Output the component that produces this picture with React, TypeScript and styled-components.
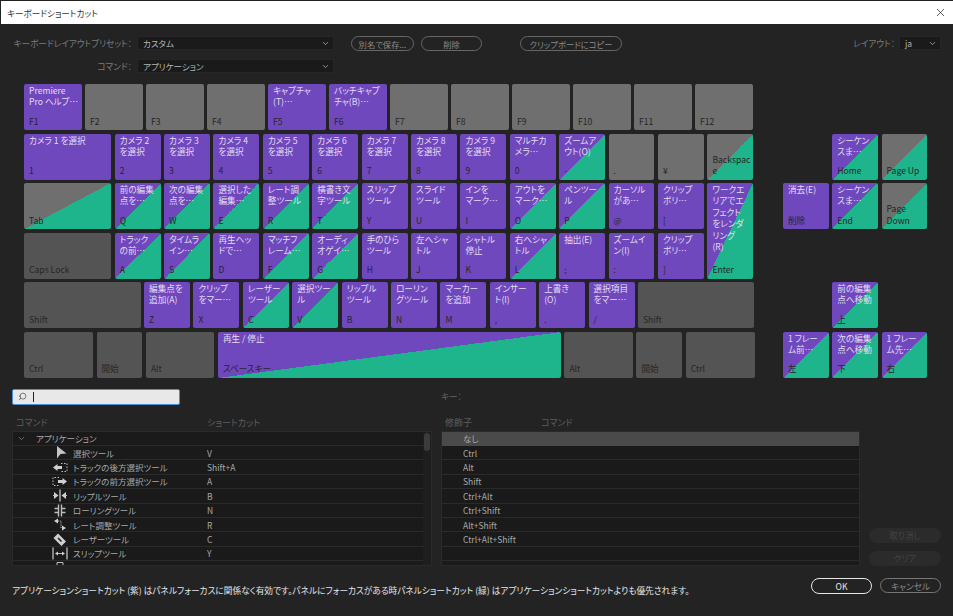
import React from 'react';
import styled, { createGlobalStyle } from 'styled-components';
import { ChevronDown, Search, X } from 'lucide-react';

const PURPLE = '#7048be';
const GREEN = '#1eb48c';
const GREY = '#6f6f6f';
const DARK = '#545454';

type KeyKind = 'app' | 'mixed' | 'panel' | 'blank' | 'dim';

interface IKeyProps {
  w: number;
  label?: string;
  name: string;
  kind?: KeyKind;
}

const GlobalStyle = createGlobalStyle`
  html, body {
    margin: 0;
    padding: 0;
    background: #232323;
  }
  body {
    font-family: "Noto Sans CJK JP", "Liberation Sans", sans-serif;
    font-size: 8.6px;
    font-feature-settings: "palt";
  }
`;

const Window = styled.div`
  width: 953px;
  height: 616px;
  overflow: hidden;
  display: flex;
  flex-direction: column;
  background: #232323;
  color: #bbb;
  opacity: 0.999;
`;

const TitleBar = styled.div`
  height: 23px;
  margin: 1px 0 0 1px;
  padding: 0 6px;
  background: #fff;
  color: #333;
  display: flex;
  align-items: center;
  justify-content: space-between;
  flex-shrink: 0;
`;

const CloseButton = styled.div`
  display: flex;
  align-items: center;
  color: #222;
`;

const Toolbar = styled.div`
  display: flex;
  align-items: flex-start;
  padding: 12px 12px 0;
  height: 60px;
  flex-shrink: 0;
  box-sizing: border-box;
`;

const FormColumn = styled.div`
  display: flex;
  flex-direction: column;
  gap: 9px;
`;

const FormRow = styled.div`
  display: flex;
  align-items: center;
  gap: 5px;
  height: 14px;
`;

const FieldLabel = styled.div`
  width: 120px;
  text-align: right;
  color: #7c7c7c;
  white-space: nowrap;
`;

const SelectBox = styled.div<{ $w: number }>`
  width: ${({ $w }) => $w}px;
  height: 14px;
  box-sizing: border-box;
  padding: 0 3px 0 5px;
  background: #1a1a1a;
  border: 1px solid #262626;
  color: #b4b4b4;
  display: flex;
  align-items: center;
  justify-content: space-between;
  font-size: 8.5px;
`;

const PillButton = styled.div<{ $w: number; $ml: number }>`
  width: ${({ $w }) => $w}px;
  margin-left: ${({ $ml }) => $ml}px;
  height: 15px;
  box-sizing: border-box;
  border: 1px solid #666;
  border-radius: 8px;
  color: #8a8a8a;
  display: flex;
  align-items: center;
  justify-content: center;
  white-space: nowrap;
  font-size: 8.3px;
`;

const ToolbarSpacer = styled.div`
  flex: 1;
`;

const LayoutLabel = styled.div`
  color: #7c7c7c;
  margin-right: 4px;
  line-height: 15px;
`;

const KeyboardArea = styled.div`
  display: flex;
  padding-left: 24px;
  flex-shrink: 0;
`;

const MainKeys = styled.div`
  width: 731px;
  display: flex;
  flex-direction: column;
  gap: 3.5px;
`;

const KeyRow = styled.div`
  display: flex;
  gap: 3.5px;
  height: 46px;
`;

const MiddleBlock = styled.div`
  display: flex;
  gap: 3.5px;
`;

const MiddleRows = styled.div`
  display: flex;
  flex-direction: column;
  gap: 3.5px;
`;

const NavCluster = styled.div`
  margin-left: 28px;
  display: grid;
  grid-template-columns: repeat(3, 45.8px);
  grid-template-rows: repeat(6, 46px);
  gap: 3.5px;
`;

const keyBackground = (kind: KeyKind) => {
  switch (kind) {
    case 'app':
      return PURPLE;
    case 'mixed':
      return `linear-gradient(to bottom right, ${PURPLE} 50%, ${GREEN} 50%)`;
    case 'panel':
      return `linear-gradient(to bottom right, ${GREY} 50%, ${GREEN} 50%)`;
    case 'dim':
      return DARK;
    default:
      return GREY;
  }
};

const KeyCap = styled.div<{ $w?: number; $kind: KeyKind; $cell?: string }>`
  width: ${({ $w }) => ($w ? `${$w}px` : 'auto')};
  ${({ $cell }) => ($cell ? `grid-area: ${$cell};` : '')}
  flex-shrink: 0;
  box-sizing: border-box;
  padding: 1px 2px 3px 5px;
  border-radius: 2px;
  background: ${({ $kind }) => keyBackground($kind)};
  display: flex;
  flex-direction: column;
  justify-content: space-between;
  overflow: hidden;
`;

const KeyLabel = styled.div`
  color: #e2dcf0;
  line-height: 11.4px;
  white-space: pre-line;
`;

const KeyName = styled.div`
  color: #262626;
  line-height: 11.4px;
  white-space: pre-line;
`;

const BottomArea = styled.div`
  display: flex;
  padding: 11px 12px 0;
  flex-shrink: 0;
`;

const ListColumn = styled.div<{ $w: number }>`
  width: ${({ $w }) => $w}px;
  display: flex;
  flex-direction: column;
  flex-shrink: 0;
`;

const SearchBox = styled.div`
  width: 168px;
  height: 16px;
  box-sizing: border-box;
  background: #e8e8e8;
  border: 1px solid #4a90d8;
  border-radius: 2px;
  display: flex;
  align-items: center;
  padding-left: 5px;
  gap: 6px;
  color: #333;
`;

const Caret = styled.div`
  width: 1px;
  height: 10px;
  background: #222;
`;

const KeyCaption = styled.div`
  height: 16px;
  line-height: 14px;
  color: #666;
`;

const ListHeader = styled.div`
  display: flex;
  height: 26px;
  padding-top: 10px;
  box-sizing: border-box;
  align-items: center;
  color: #5e5e5e;
  padding-left: 4px;
  font-size: 9px;
`;

const HeaderCell = styled.div<{ $w: number }>`
  width: ${({ $w }) => $w}px;
`;

const ListPanel = styled.div<{ $w: number }>`
  width: ${({ $w }) => $w}px;
  height: 135px;
  position: relative;
  overflow: hidden;
  background: #1a1a1a;
  box-sizing: border-box;
  border: 1px solid #2a2a2a;
`;

const ListRow = styled.div<{ $selected?: boolean; $tight?: boolean }>`
  height: 14.42px;
  box-sizing: border-box;
  display: flex;
  align-items: center;
  border-bottom: 1px solid ${({ $selected }) => ($selected ? '#4a4a4a' : '#2a2a2a')};
  background: ${({ $selected }) => ($selected ? '#4a4a4a' : 'transparent')};
  margin-right: ${({ $tight }) => ($tight ? 8 : 0)}px;
  color: #a8a8a8;
  font-size: 8.5px;
`;

const TreeToggle = styled.div`
  width: 23px;
  padding-left: 4px;
  box-sizing: border-box;
  display: flex;
  color: #8a8a8a;
`;

const IconCell = styled.div`
  width: 60px;
  padding-left: 39px;
  box-sizing: border-box;
  display: flex;
  align-items: center;
  flex-shrink: 0;
`;

const CommandName = styled.div`
  width: 134px;
  white-space: nowrap;
  flex-shrink: 0;
`;

const ModifierName = styled.div`
  padding-left: 21px;
`;

const ScrollTrack = styled.div`
  position: absolute;
  right: 0;
  top: 0;
  bottom: 0;
  width: 8px;
  background: #1e1e1e;
`;

const ScrollThumb = styled.div`
  margin: 1px 1px 0;
  height: 18px;
  border-radius: 3px;
  background: #3c3c3c;
`;

const SideButtons = styled.div`
  margin-left: 9px;
  align-self: flex-end;
  display: flex;
  flex-direction: column;
  gap: 8px;
`;

const GhostButton = styled.div`
  width: 72px;
  height: 15px;
  border-radius: 8px;
  background: #2b2b2b;
  color: #444;
  display: flex;
  align-items: center;
  justify-content: center;
`;

const FooterRow = styled.div`
  display: flex;
  padding: 12px 12px 0;
  justify-content: space-between;
  align-items: flex-start;
`;

const Notice = styled.div`
  margin-top: 6px;
  color: #e4e4e4;
  white-space: nowrap;
  font-size: 8.7px;
`;

const DialogButtons = styled.div`
  display: flex;
  gap: 8px;
  align-items: center;
`;

const DialogButton = styled.div<{ $primary?: boolean }>`
  width: 61px;
  height: ${({ $primary }) => ($primary ? 16 : 15)}px;
  box-sizing: border-box;
  border: 1px solid ${({ $primary }) => ($primary ? '#e6e6e6' : '#777')};
  border-radius: 8px;
  color: ${({ $primary }) => ($primary ? '#e6e6e6' : '#888')};
  display: flex;
  align-items: center;
  justify-content: center;
`;

const Glyph: React.FC<{ children: React.ReactNode }> = ({ children }) => (
  <svg width="16" height="13" viewBox="0 0 16 13" fill="none" stroke="#bdbdbd" strokeWidth="1">
    {children}
  </svg>
);

const toolIcons: Record<string, React.ReactNode> = {
  select: (
    <Glyph>
      <path d="M5 0 L14.5 7.5 L8.5 8 L5 12.5 Z" fill="#c4c4c4" stroke="none" />
    </Glyph>
  ),
  back: (
    <Glyph>
      <path d="M1 6.5 L5.5 3 V5 H10 V8 H5.5 V10 Z" fill="#d0d0d0" stroke="none" />
      <path d="M9 2.5 H15 V10.5 H9" strokeDasharray="1.5 1.5" />
    </Glyph>
  ),
  forward: (
    <Glyph>
      <path d="M15 6.5 L10.5 3 V5 H6 V8 H10.5 V10 Z" fill="#d0d0d0" stroke="none" />
      <path d="M7 2.5 H1 V10.5 H7" strokeDasharray="1.5 1.5" />
    </Glyph>
  ),
  ripple: (
    <Glyph>
      <path d="M8 0.5 V12.5" strokeWidth="1.4" />
      <path d="M6.5 6.5 L2 3 V10 Z M9.5 6.5 L14 3 V10 Z" fill="#d0d0d0" stroke="none" />
      <path d="M1 6.5 H3 M13 6.5 H15" />
    </Glyph>
  ),
  rolling: (
    <Glyph>
      <path d="M6.5 0.5 V12.5 M9.5 0.5 V12.5" strokeWidth="1.4" />
      <path d="M2.5 4.5 H6 M2.5 8.5 H6 M10 4.5 H13.5 M10 8.5 H13.5" strokeWidth="1.6" />
    </Glyph>
  ),
  rate: (
    <Glyph>
      <path d="M2 3 L6 0.5 V5.5 Z M14 10 L10 7.5 V12.5 Z" fill="#d0d0d0" stroke="none" />
      <path d="M6 3 H9 V10 H10" strokeDasharray="1.2 1" />
    </Glyph>
  ),
  razor: (
    <Glyph>
      <path d="M1.5 5 L6 0.5 L14 8.5 L9.5 13 Z" fill="#d0d0d0" stroke="none" />
      <path d="M6 5 L9.5 8.5" stroke="#222" strokeWidth="1.6" />
    </Glyph>
  ),
  slip: (
    <Glyph>
      <path d="M1 0.5 V12.5 M15 0.5 V12.5" strokeWidth="1.3" />
      <path d="M4 6.5 H12" />
      <path d="M3 6.5 L6 4.5 V8.5 Z M13 6.5 L10 4.5 V8.5 Z" fill="#d0d0d0" stroke="none" />
    </Glyph>
  ),
  slide: (
    <Glyph>
      <path d="M5 1.5 H11 V8 H5 Z" />
      <path d="M1 6 V12 M15 6 V12" />
    </Glyph>
  ),
};

const tools = [
  { icon: 'select', name: '選択ツール', key: 'V' },
  { icon: 'back', name: 'トラックの後方選択ツール', key: 'Shift+A' },
  { icon: 'forward', name: 'トラックの前方選択ツール', key: 'A' },
  { icon: 'ripple', name: 'リップルツール', key: 'B' },
  { icon: 'rolling', name: 'ローリングツール', key: 'N' },
  { icon: 'rate', name: 'レート調整ツール', key: 'R' },
  { icon: 'razor', name: 'レーザーツール', key: 'C' },
  { icon: 'slip', name: 'スリップツール', key: 'Y' },
  { icon: 'slide', name: 'スライドツール', key: 'U' },
];

const modifiers = ['なし', 'Ctrl', 'Alt', 'Shift', 'Ctrl+Alt', 'Ctrl+Shift', 'Alt+Shift', 'Ctrl+Alt+Shift', ''];

const F = 57.5;
const K = 45.9;
const WIDE = 87.2;

const functionRow: IKeyProps[] = [
  { w: F, label: 'Premiere\nPro ヘルプ…', name: 'F1', kind: 'app' },
  { w: F, name: 'F2' },
  { w: F, name: 'F3' },
  { w: F, name: 'F4' },
  { w: F, label: 'キャプチャ\n(T)…', name: 'F5', kind: 'app' },
  { w: F, label: 'バッチキャプ\nチャ(B)…', name: 'F6', kind: 'app' },
  { w: F, name: 'F7' },
  { w: F, name: 'F8' },
  { w: F, name: 'F9' },
  { w: F, name: 'F10' },
  { w: F, name: 'F11' },
  { w: F, name: 'F12' },
];

const numberRow: IKeyProps[] = [
  { w: WIDE, label: 'カメラ 1 を選択', name: '1', kind: 'app' },
  { w: K, label: 'カメラ 2\nを選択', name: '2', kind: 'app' },
  { w: K, label: 'カメラ 3\nを選択', name: '3', kind: 'app' },
  { w: K, label: 'カメラ 4\nを選択', name: '4', kind: 'app' },
  { w: K, label: 'カメラ 5\nを選択', name: '5', kind: 'app' },
  { w: K, label: 'カメラ 6\nを選択', name: '6', kind: 'app' },
  { w: K, label: 'カメラ 7\nを選択', name: '7', kind: 'app' },
  { w: K, label: 'カメラ 8\nを選択', name: '8', kind: 'app' },
  { w: K, label: 'カメラ 9\nを選択', name: '9', kind: 'app' },
  { w: K, label: 'マルチカ\nメラ…', name: '0', kind: 'app' },
  { w: K, label: 'ズームア\nウト(O)', name: '-', kind: 'mixed' },
  { w: K, name: '.' },
  { w: K, name: '¥' },
  { w: K, name: 'Backspac\ne', kind: 'panel' },
];

const qwertyRow: IKeyProps[] = [
  { w: WIDE, name: 'Tab', kind: 'panel' },
  { w: K, label: '前の編集\n点を…', name: 'Q', kind: 'mixed' },
  { w: K, label: '次の編集\n点を…', name: 'W', kind: 'mixed' },
  { w: K, label: '選択した\n編集…', name: 'E', kind: 'mixed' },
  { w: K, label: 'レート調\n整ツール', name: 'R', kind: 'mixed' },
  { w: K, label: '横書き文\n字ツール', name: 'T', kind: 'mixed' },
  { w: K, label: 'スリップ\nツール', name: 'Y', kind: 'app' },
  { w: K, label: 'スライド\nツール', name: 'U', kind: 'app' },
  { w: K, label: 'インを\nマーク…', name: 'I', kind: 'app' },
  { w: K, label: 'アウトを\nマーク…', name: 'O', kind: 'mixed' },
  { w: K, label: 'ペンツー\nル', name: 'P', kind: 'mixed' },
  { w: K, label: 'カーソル\nがあ…', name: '@', kind: 'app' },
  { w: K, label: 'クリップ\nボリ…', name: '[', kind: 'app' },
];

const homeRow: IKeyProps[] = [
  { w: WIDE, name: 'Caps Lock', kind: 'dim' },
  { w: K, label: 'トラック\nの前…', name: 'A', kind: 'mixed' },
  { w: K, label: 'タイムラ\nイン…', name: 'S', kind: 'mixed' },
  { w: K, label: '再生ヘッ\nドで…', name: 'D', kind: 'app' },
  { w: K, label: 'マッチフ\nレーム…', name: 'F', kind: 'mixed' },
  { w: K, label: 'オーディ\nオゲイ…', name: 'G', kind: 'mixed' },
  { w: K, label: '手のひら\nツール', name: 'H', kind: 'app' },
  { w: K, label: '左へシャ\nトル', name: 'J', kind: 'app' },
  { w: K, label: 'シャトル\n停止', name: 'K', kind: 'app' },
  { w: K, label: '右へシャ\nトル', name: 'L', kind: 'mixed' },
  { w: K, label: '抽出(E)', name: ';', kind: 'app' },
  { w: K, label: 'ズームイ\nン(I)', name: ':', kind: 'app' },
  { w: K, label: 'クリップ\nボリ…', name: ']', kind: 'app' },
];

const shiftRow: IKeyProps[] = [
  { w: 116.6, name: 'Shift', kind: 'dim' },
  { w: K, label: '編集点を\n追加(A)', name: 'Z', kind: 'app' },
  { w: K, label: 'クリップ\nをマー…', name: 'X', kind: 'app' },
  { w: K, label: 'レーザー\nツール', name: 'C', kind: 'mixed' },
  { w: K, label: '選択ツー\nル', name: 'V', kind: 'mixed' },
  { w: K, label: 'リップル\nツール', name: 'B', kind: 'app' },
  { w: K, label: 'ローリン\nグツール', name: 'N', kind: 'app' },
  { w: K, label: 'マーカー\nを追加', name: 'M', kind: 'app' },
  { w: K, label: 'インサー\nト(I)', name: ',', kind: 'app' },
  { w: K, label: '上書き\n(O)', name: '.', kind: 'app' },
  { w: K, label: '選択項目\nをマー…', name: '/', kind: 'app' },
  { w: 116.2, name: 'Shift', kind: 'dim' },
];

const spaceRow: IKeyProps[] = [
  { w: 69, name: 'Ctrl', kind: 'dim' },
  { w: K, name: '開始', kind: 'dim' },
  { w: 68.5, name: 'Alt', kind: 'dim' },
  { w: 343, label: '再生 / 停止', name: 'スペースキー', kind: 'mixed' },
  { w: 68.5, name: 'Alt', kind: 'dim' },
  { w: K, name: '開始', kind: 'dim' },
  { w: 69, name: 'Ctrl', kind: 'dim' },
];

const navKeys: (IKeyProps & { cell: string })[] = [
  { cell: '2 / 2', w: 0, label: 'シーケン\nスま…', name: 'Home', kind: 'mixed' },
  { cell: '2 / 3', w: 0, name: 'Page Up', kind: 'panel' },
  { cell: '3 / 1', w: 0, label: '消去(E)', name: '削除', kind: 'app' },
  { cell: '3 / 2', w: 0, label: 'シーケン\nスま…', name: 'End', kind: 'mixed' },
  { cell: '3 / 3', w: 0, name: 'Page\nDown', kind: 'panel' },
  { cell: '5 / 2', w: 0, label: '前の編集\n点へ移動', name: '上', kind: 'mixed' },
  { cell: '6 / 1', w: 0, label: '1 フレー\nム前…', name: '左', kind: 'mixed' },
  { cell: '6 / 2', w: 0, label: '次の編集\n点へ移動', name: '下', kind: 'mixed' },
  { cell: '6 / 3', w: 0, label: '1 フレー\nム先…', name: '右', kind: 'mixed' },
];

const Key: React.FC<IKeyProps & { cell?: string }> = ({ w, label, name, kind = 'blank', cell }) => (
  <KeyCap $w={w} $kind={kind} $cell={cell}>
    <KeyLabel>{label}</KeyLabel>
    <KeyName>{name}</KeyName>
  </KeyCap>
);

const renderRow = (keys: IKeyProps[]) => (
  <KeyRow>
    {keys.map((k, i) => (
      <Key key={`${k.name}-${i}`} {...k} />
    ))}
  </KeyRow>
);

const App: React.FC = () => {
  return (
    <>
      <GlobalStyle />
      <Window>
        <TitleBar>
          キーボードショートカット
          <CloseButton>
            <X size={13} strokeWidth={1.3} />
          </CloseButton>
        </TitleBar>

        <Toolbar>
          <FormColumn>
            <FormRow>
              <FieldLabel>キーボードレイアウトプリセット：</FieldLabel>
              <SelectBox $w={197}>
                カスタム
                <ChevronDown size={9} />
              </SelectBox>
            </FormRow>
            <FormRow>
              <FieldLabel>コマンド：</FieldLabel>
              <SelectBox $w={197}>
                アプリケーション
                <ChevronDown size={9} />
              </SelectBox>
            </FormRow>
          </FormColumn>
          <PillButton $w={63} $ml={17}>別名で保存...</PillButton>
          <PillButton $w={61} $ml={7}>削除</PillButton>
          <PillButton $w={102} $ml={38}>クリップボードにコピー</PillButton>
          <ToolbarSpacer />
          <LayoutLabel>レイアウト：</LayoutLabel>
          <SelectBox $w={42}>
            ja
            <ChevronDown size={9} />
          </SelectBox>
        </Toolbar>

        <KeyboardArea>
          <MainKeys>
            {renderRow(functionRow)}
            {renderRow(numberRow)}
            <MiddleBlock>
              <MiddleRows>
                {renderRow(qwertyRow)}
                {renderRow(homeRow)}
              </MiddleRows>
              <Key w={K} label={'ワークエ\nリアでエ\nフェクト\nをレンダ\nリング\n(R)'} name="Enter" kind="mixed" />
            </MiddleBlock>
            {renderRow(shiftRow)}
            {renderRow(spaceRow)}
          </MainKeys>
          <NavCluster>
            {navKeys.map((k) => (
              <Key key={k.cell} {...k} />
            ))}
          </NavCluster>
        </KeyboardArea>

        <BottomArea>
          <ListColumn $w={429}>
            <SearchBox>
              <Search size={9} strokeWidth={1.6} style={{ transform: 'scaleX(-1)' }} />
              <Caret />
            </SearchBox>
            <ListHeader>
              <HeaderCell $w={191}>コマンド</HeaderCell>
              <HeaderCell $w={100}>ショートカット</HeaderCell>
            </ListHeader>
            <ListPanel $w={420}>
              <ListRow $tight>
                <TreeToggle>
                  <ChevronDown size={9} />
                </TreeToggle>
                アプリケーション
              </ListRow>
              {tools.map((t) => (
                <ListRow key={t.name} $tight>
                  <IconCell>{toolIcons[t.icon]}</IconCell>
                  <CommandName>{t.name}</CommandName>
                  {t.key}
                </ListRow>
              ))}
              <ScrollTrack>
                <ScrollThumb />
              </ScrollTrack>
            </ListPanel>
          </ListColumn>

          <ListColumn $w={419}>
            <KeyCaption>キー：</KeyCaption>
            <ListHeader>
              <HeaderCell $w={96}>修飾子</HeaderCell>
              <HeaderCell $w={100}>コマンド</HeaderCell>
            </ListHeader>
            <ListPanel $w={419}>
              {modifiers.map((m, i) => (
                <ListRow key={`${m}-${i}`} $selected={i === 0}>
                  <ModifierName>{m}</ModifierName>
                </ListRow>
              ))}
            </ListPanel>
          </ListColumn>

          <SideButtons>
            <GhostButton>取り消し</GhostButton>
            <GhostButton>クリア</GhostButton>
          </SideButtons>
        </BottomArea>

        <FooterRow>
          <Notice>
            アプリケーションショートカット (紫) はパネルフォーカスに関係なく有効です。パネルにフォーカスがある時パネルショートカット (緑) はアプリケーションショートカットよりも優先されます。
          </Notice>
          <DialogButtons>
            <DialogButton $primary>OK</DialogButton>
            <DialogButton>キャンセル</DialogButton>
          </DialogButtons>
        </FooterRow>
      </Window>
    </>
  );
};

export default App;
